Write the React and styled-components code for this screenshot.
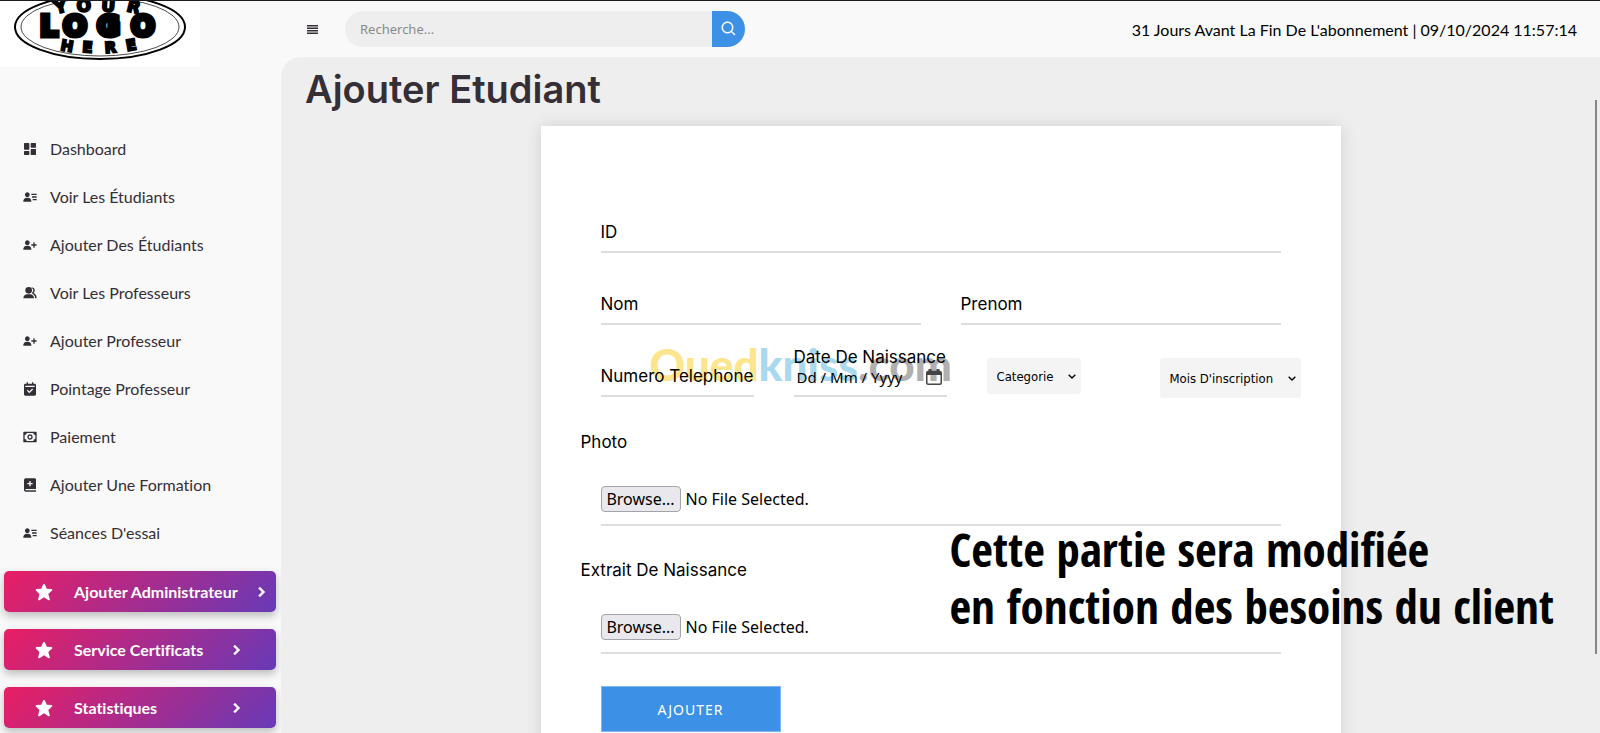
import React from 'react';
import styled, { createGlobalStyle } from 'styled-components';
import {
  BiChevronDown,
  BiChevronRight,
  BiMoney,
  BiSearch,
  BiSolidBookAdd,
  BiSolidCalendarCheck,
  BiSolidDashboard,
  BiSolidStar,
  BiSolidUserDetail,
  BiSolidUserPlus,
} from 'react-icons/bi';

const COLOR = {
  light: '#f9f9f9',
  grey: '#eeeeee',
  dark: '#342e37',
  blue: '#3c91e6',
  line: '#dddddd',
};

const FONT = {
  lato: "Lato, 'Open Sans', sans-serif",
  title: 'Inter, Roboto, sans-serif',
  system: "'Noto Sans', 'Open Sans', sans-serif",
  control: "'DejaVu Sans Condensed', 'Noto Sans', sans-serif",
};

const GlobalStyle = createGlobalStyle`
  *,
  *::before,
  *::after {
    box-sizing: border-box;
  }
  body {
    margin: 0;
    background: ${COLOR.light};
    font-family: ${FONT.lato};
    font-size: 16px;
  }
`;

const Shell = styled.div`
  display: flex;
  height: 100vh;
  overflow: hidden;
  border-top: 1px solid #1c1b22;
`;

const Sidebar = styled.aside`
  flex: 0 0 281px;
  overflow: hidden;
`;
const Brand = styled.a`
  display: block;
  width: 200px;
  height: 66px;
  background: #ffffff;
`;
const Menu = styled.ul`
  margin: 57px 0 15px;
  padding: 0;
  list-style: none;
`;
const MenuLink = styled.a`
  display: flex;
  align-items: center;
  gap: 12px;
  height: 48px;
  padding-left: 22px;
  color: ${COLOR.dark};
  font-variant-ligatures: none;
  text-decoration: none;

  svg {
    width: 16px;
    height: 16px;
    margin-top: 2px;
  }
`;
const Shortcuts = styled.div`
  display: flex;
  flex-direction: column;
  gap: 17px;
  padding: 0 5px 0 4px;
`;
const Shortcut = styled.button`
  display: flex;
  align-items: center;
  height: 41px;
  padding: 0 0 0 30px;
  border: 0;
  border-radius: 5px;
  background: linear-gradient(135deg, #e91e63, #673ab7);
  box-shadow: 0 4px 8px rgba(0, 0, 0, 0.25);
  color: #ffffff;
  font: bold 16px ${FONT.lato};
  font-variant-ligatures: none;
  text-align: left;
`;
const StarIcon = styled(BiSolidStar)`
  width: 20px;
  height: 20px;
`;
const ShortcutLabel = styled.span`
  min-width: 139px;
  margin: 0 13px 0 20px;
`;
const ArrowIcon = styled(BiChevronRight)`
  width: 20px;
  height: 20px;
  stroke: currentColor;
  stroke-width: 1;
`;

const Content = styled.div`
  display: flex;
  flex: 1;
  flex-direction: column;
  min-width: 0;
`;
const Topbar = styled.header`
  display: flex;
  flex: 0 0 56px;
  align-items: center;
  padding: 0 23px 0 24px;
`;
const MenuButton = styled.button`
  display: flex;
  padding: 0 3px 0 2px;
  border: 0;
  background: none;
  color: ${COLOR.dark};
`;
const SearchForm = styled.form`
  display: flex;
  width: 400px;
  height: 36px;
  margin-left: 24px;
`;
const SearchInput = styled.input`
  flex: 1;
  min-width: 0;
  padding: 0 15px;
  border: 0;
  border-radius: 36px 0 0 36px;
  background: ${COLOR.grey};
  font: 13px ${FONT.system};

  &::placeholder {
    color: #8a8a8a;
  }
`;
const SearchButton = styled.button`
  display: flex;
  align-items: center;
  justify-content: center;
  width: 33px;
  padding: 0;
  border: 0;
  border-radius: 0 36px 36px 0;
  background: ${COLOR.blue};
  color: ${COLOR.light};

  svg {
    width: 18px;
    height: 18px;
    stroke: currentColor;
  }
`;
const Subscription = styled.p`
  margin: 0 0 0 auto;
  color: #000000;
`;

const Main = styled.main`
  position: relative;
  flex: 1;
  min-height: 0;
  padding: 5px 24px;
  overflow: hidden;
  border-radius: 20px 0 0 0;
  background: ${COLOR.grey};
`;
const ScrollThumb = styled.div`
  position: absolute;
  top: 43px;
  right: 3px;
  width: 2px;
  height: 554px;
  background: #858585;
`;
const PageTitle = styled.h1`
  margin: 0 0 10px;
  color: ${COLOR.dark};
  font: 600 38px/54px ${FONT.title};
`;
const Card = styled.section`
  position: relative;
  width: 800px;
  margin: 0 auto;
  padding: 87px 40px 60px;
  background: #ffffff;
  box-shadow: 0 0 16px rgba(0, 0, 0, 0.12);
`;
const Form = styled.form`
  position: relative;
  display: flex;
  flex-direction: column;
  gap: 32px;
  font: 17px/24px ${FONT.title};
`;
const Row = styled.div`
  display: flex;
  align-items: flex-start;
`;
const Field = styled.div`
  position: relative;
  flex: 1 1 0;
  min-width: 0;
  height: 40px;
  margin: 0 20px;
  border-bottom: ${({ $plain }) => ($plain ? '0' : `2px solid ${COLOR.line}`)};
`;
const FieldLabel = styled.label`
  position: absolute;
  bottom: ${({ $raised }) => ($raised ? '26px' : '7px')};
  left: 0;
  white-space: nowrap;
  pointer-events: none;
`;
const FieldInput = styled.input`
  width: 100%;
  height: 100%;
  padding: ${({ $date }) => ($date ? '2px 0 0 3px' : '0')};
  border: 0;
  outline: 0;
  background: transparent;
  font: 15px ${FONT.system};

  &::placeholder {
    color: #000000;
  }
`;
const PickerButton = styled.button`
  position: absolute;
  right: 5px;
  bottom: 10px;
  display: flex;
  padding: 0;
  border: 0;
  background: none;
  color: #444444;
`;
const SelectBox = styled.div`
  position: relative;
  display: inline-block;
  margin-top: 1px;

  svg {
    position: absolute;
    top: calc(50% - 8px);
    right: 1px;
    width: 16px;
    height: 16px;
    stroke: currentColor;
    pointer-events: none;
  }
`;
const Select = styled.select`
  width: ${({ $wide }) => ($wide ? '141px' : '94px')};
  height: ${({ $wide }) => ($wide ? '40px' : '36px')};
  padding: 0 10px;
  appearance: none;
  border: 0;
  border-radius: 3px;
  background: #f4f4f4;
  color: #000000;
  font: 13px ${FONT.control};
`;
const FileField = styled.div`
  display: flex;
  align-items: flex-start;
  gap: 5px;
  height: 40px;
  margin: 0 20px;
  border-bottom: 2px solid ${COLOR.line};
  font: 16px/26px ${FONT.system};
`;
const HiddenFile = styled.input`
  position: absolute;
  width: 1px;
  height: 1px;
  opacity: 0;
`;
const Browse = styled.label`
  width: 80px;
  height: 26px;
  border: 1px solid #a3a3ad;
  border-radius: 4px;
  background: #e9e9ed;
  line-height: 24px;
  text-align: center;
`;
const Submit = styled.button`
  align-self: flex-start;
  width: 180px;
  height: 46px;
  margin: 0 20px;
  border: 1px solid #7db8f2;
  background: ${COLOR.blue};
  color: #ffffff;
  font: 14px ${FONT.system};
  letter-spacing: 1px;
`;

const Watermark = styled.div`
  position: absolute;
  top: 212px;
  left: 109px;
  color: #fce58c;
  font: 900 44px/52px ${FONT.lato};
`;
const WatermarkPart = styled.span`
  color: ${({ $color }) => $color};
`;
const Note = styled.p`
  position: absolute;
  top: 395px;
  left: 409px;
  margin: 0;
  color: #000000;
  font: 47px/57px 'Open Sans Condensed', 'Roboto Condensed', 'Liberation Sans Narrow', sans-serif;
  white-space: nowrap;
`;

function MenuIcon() {
  return (
    <svg width="11" height="9" viewBox="0 0 11 9" fill="currentColor">
      <path d="M0 0h11v1.500H0zM0 2.500h11V4H0zM0 5h11v1.500H0zM0 7.500h11V9H0z" />
    </svg>
  );
}

// person with a second one behind the right shoulder
function ProfessorsIcon() {
  return (
    <svg viewBox="0 0 24 24" fill="currentColor">
      <circle cx="10" cy="8" r="5" />
      <path d="M2 20c0-4 3-6 6-6h4c3 0 6 2 6 6z" />
      <path d="M14.5 3.2c3 .4 4.700 2.500 4.700 4.800 0 1.700-.8 3-1.900 3.900 3 1.300 4.700 4 4.700 8.100h-2.200c0-3.700-1.700-6-4.800-7.400V11.500c1.300-.8 2-2 2-3.500s-.9-2.600-2.500-3.100z" />
    </svg>
  );
}

function DateIcon() {
  return (
    <svg width="16" height="16" viewBox="0 0 16 16" fill="none" stroke="currentColor">
      <rect x="0.75" y="2.500" width="14.500" height="12.750" rx="1.500" strokeWidth="1.500" />
      <path d="M1 4.500h14M4 0v4M12 0v4" strokeWidth="3" />
    </svg>
  );
}

const MENU = [
  { icon: BiSolidDashboard, name: 'Dashboard' },
  { icon: BiSolidUserDetail, name: 'Voir Les Étudiants' },
  { icon: BiSolidUserPlus, name: 'Ajouter Des Étudiants' },
  { icon: ProfessorsIcon, name: 'Voir Les Professeurs' },
  { icon: BiSolidUserPlus, name: 'Ajouter Professeur' },
  { icon: BiSolidCalendarCheck, name: 'Pointage Professeur' },
  { icon: BiMoney, name: 'Paiement' },
  { icon: BiSolidBookAdd, name: 'Ajouter Une Formation' },
  { icon: BiSolidUserDetail, name: "Séances D'essai" },
];

const SHORTCUTS = ['Ajouter Administrateur', 'Service Certificats', 'Statistiques'];

function Logo() {
  return (
    <svg
      width="200"
      height="66"
      viewBox="0 0 200 66"
      fontFamily="'DejaVu Sans', sans-serif"
      fontWeight="bold"
      stroke="#000"
    >
      <ellipse cx="100" cy="26" rx="85" ry="32" fill="none" strokeWidth="2" />
      <ellipse cx="100" cy="26" rx="79" ry="29" fill="none" strokeWidth="0.7" />
      <text x="56 77 101 126" y="13 11 10 10" rotate="-14 -4 4 14" fontSize="17" strokeWidth="2">
        YOUR
      </text>
      <text x="40 63 97 131" y="35" fontSize="28" strokeWidth="5">
        LOGO
      </text>
      <text x="60 82 105 127" y="49 51 52 50" rotate="10 4 -4 -10" fontSize="15" strokeWidth="2">
        HERE
      </text>
    </svg>
  );
}

function TextField({ id, label }) {
  return (
    <Field>
      <FieldInput id={id} type="text" />
      <FieldLabel htmlFor={id}>{label}</FieldLabel>
    </Field>
  );
}

function SelectField({ label, wide }) {
  return (
    <SelectBox>
      <Select $wide={wide} aria-label={label}>
        <option>{label}</option>
      </Select>
      <BiChevronDown />
    </SelectBox>
  );
}

function FileInput({ id, label }) {
  return (
    <>
      <span id={`${id}-label`}>{label}</span>
      <FileField>
        <HiddenFile id={id} type="file" aria-labelledby={`${id}-label`} />
        <Browse htmlFor={id}>Browse...</Browse>
        <span>No File Selected.</span>
      </FileField>
    </>
  );
}

export default function App() {
  return (
    <>
      <GlobalStyle />
      <Shell>
        <Sidebar>
          <Brand href="#" aria-label="Accueil">
            <Logo />
          </Brand>
          <nav>
            <Menu>
              {MENU.map(({ icon: Icon, name }) => (
                <li key={name}>
                  <MenuLink href="#">
                    <Icon />
                    <span>{name}</span>
                  </MenuLink>
                </li>
              ))}
            </Menu>
          </nav>
          <Shortcuts>
            {SHORTCUTS.map((name) => (
              <Shortcut key={name} type="button">
                <StarIcon />
                <ShortcutLabel>{name}</ShortcutLabel>
                <ArrowIcon />
              </Shortcut>
            ))}
          </Shortcuts>
        </Sidebar>
        <Content>
          <Topbar>
            <MenuButton type="button" aria-label="Menu">
              <MenuIcon />
            </MenuButton>
            <SearchForm>
              <SearchInput type="search" placeholder="Recherche..." aria-label="Recherche" />
              <SearchButton type="submit" aria-label="Rechercher">
                <BiSearch />
              </SearchButton>
            </SearchForm>
            <Subscription>
              31 Jours Avant La Fin De L'abonnement | 09/10/2024 11:57:14
            </Subscription>
          </Topbar>
          <Main>
            <PageTitle>Ajouter Etudiant</PageTitle>
            <Card>
              <Watermark aria-hidden="true">
                Oued
                <WatermarkPart $color="#a9d9ee">kniss</WatermarkPart>
                <WatermarkPart $color="#b0b0b0">.com</WatermarkPart>
              </Watermark>
              <Form>
                <Row>
                  <TextField id="student-id" label="ID" />
                </Row>
                <Row>
                  <TextField id="nom" label="Nom" />
                  <TextField id="prenom" label="Prenom" />
                </Row>
                <Row>
                  <TextField id="telephone" label="Numero Telephone" />
                  <Field>
                    <FieldInput id="naissance" type="text" placeholder="Dd / Mm / Yyyy" $date />
                    <FieldLabel htmlFor="naissance" $raised>
                      Date De Naissance
                    </FieldLabel>
                    <PickerButton type="button" aria-label="Choisir une date">
                      <DateIcon />
                    </PickerButton>
                  </Field>
                  <Field $plain>
                    <SelectField label="Categorie" />
                  </Field>
                  <SelectField label="Mois D'inscription" wide />
                </Row>
                <FileInput id="photo" label="Photo" />
                <FileInput id="extrait" label="Extrait De Naissance" />
                <Submit type="submit">AJOUTER</Submit>
              </Form>
              <Note>
                Cette partie sera modifiée
                <br />
                en fonction des besoins du client
              </Note>
            </Card>
            <ScrollThumb />
          </Main>
        </Content>
      </Shell>
    </>
  );
}
